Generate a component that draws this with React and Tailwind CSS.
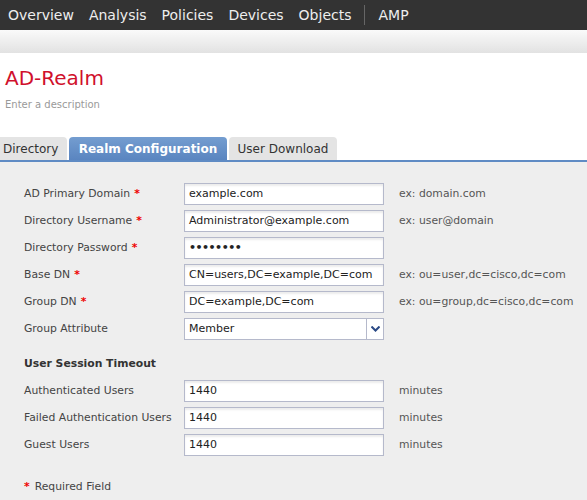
// Realm configuration form
const NAV = ['Overview', 'Analysis', 'Policies', 'Devices', 'Objects'];

const FIELDS = [
  { label: 'AD Primary Domain', req: true, value: 'example.com', hint: 'ex: domain.com' },
  { label: 'Directory Username', req: true, value: 'Administrator@example.com', hint: 'ex: user@domain' },
  { label: 'Directory Password', req: true, value: '••••••••', hint: '', pw: true },
  { label: 'Base DN', req: true, value: 'CN=users,DC=example,DC=com', hint: 'ex: ou=user,dc=cisco,dc=com' },
  { label: 'Group DN', req: true, value: 'DC=example,DC=com', hint: 'ex: ou=group,dc=cisco,dc=com' },
];

const TIMEOUTS = ['Authenticated Users', 'Failed Authentication Users', 'Guest Users'];

function Star() {
  return <span className="text-[#e00] font-bold ml-1">*</span>;
}

function Box({ children }) {
  return (
    <div className="w-[200px] h-[22px] border border-[#b5b9cb] bg-white shadow-[inset_0_2px_2px_rgba(0,0,0,0.08)] flex items-center px-[4px] text-[11px] text-[#222] overflow-hidden whitespace-nowrap">
      {children}
    </div>
  );
}

export default function App() {
  return (
    <div className="w-[587px] h-[500px] overflow-hidden bg-[#eeeeee] font-['DejaVu_Sans',sans-serif]">
      {/* Top nav */}
      <div className="h-[30px] bg-[#333333] flex items-center pl-[8px] text-[14px] text-[#eeeeee]">
        {NAV.map(n => (
          <span key={n} className="mr-[15px]">{n}</span>
        ))}
        <span className="w-px h-[20px] bg-[#666] mr-[13px] -ml-[2px]" />
        <span>AMP</span>
      </div>
      <div className="h-[23px] bg-gradient-to-b from-[#fafafa] to-[#e2e2e2]" />

      {/* Header */}
      <div className="bg-white h-[84px] pl-[5px] pt-[13px]">
        <div className="text-[20px] text-[#d0102c] leading-[24px]">AD-Realm</div>
        <div className="text-[10px] text-[#999] mt-[7px]">Enter a description</div>
      </div>

      {/* Tabs */}
      <div className="bg-white flex items-end h-[25px] border-b-[2px] border-[#5f8bc4]">
        <div className="h-[23px] w-[67px] bg-[#e4e4e4] rounded-tr-[4px] flex items-center pl-[3px] text-[12px] text-[#333]">Directory</div>
        <div className="h-[23px] ml-[2px] w-[158px] bg-gradient-to-b from-[#749dd0] to-[#5a85c0] rounded-t-[4px] flex items-center justify-center text-[12px] font-bold text-white">Realm Configuration</div>
        <div className="h-[23px] ml-[2px] w-[108px] bg-[#e4e4e4] rounded-t-[4px] flex items-center justify-center text-[12px] text-[#333]">User Download</div>
      </div>

      {/* Form */}
      <div className="pl-[24px] pt-[21px] text-[10.8px] text-[#444]">
        <div className="flex flex-col gap-[5px]">
          {FIELDS.map(f => (
            <div key={f.label} className="flex items-center h-[22px]">
              <div className="w-[160px]">{f.label}{f.req && <Star />}</div>
              <Box>{f.pw ? <span className="text-[11px] font-bold tracking-[-0.5px]">{f.value}</span> : f.value}</Box>
              <div className="ml-[15px] text-[#555]">{f.hint}</div>
            </div>
          ))}
          <div className="flex items-center h-[22px]">
            <div className="w-[160px]">Group Attribute</div>
            <div className="w-[200px] h-[22px] border border-[#b5b9cb] bg-white flex items-center text-[11px] text-[#222]">
              <span className="flex-1 px-[4px]">Member</span>
              <span className="w-[17px] h-full border-l border-[#b5b9cb] flex items-center justify-center">
                <svg width="9" height="6" viewBox="0 0 9 6">
                  <path d="M0.5 0.5 L4.5 4.5 L8.5 0.5" stroke="#2b4a86" strokeWidth="2" fill="none" />
                </svg>
              </span>
            </div>
          </div>
        </div>

        <div className="font-bold text-[#333] mt-[16px] mb-[8px]">User Session Timeout</div>
        <div className="flex flex-col gap-[5px]">
          {TIMEOUTS.map(t => (
            <div key={t} className="flex items-center h-[22px]">
              <div className="w-[160px]">{t}</div>
              <Box>1440</Box>
              <div className="ml-[15px] text-[#555]">minutes</div>
            </div>
          ))}
        </div>

        <div className="mt-[23px]"><span className="text-[#e00] font-bold mr-[5px]">*</span>Required Field</div>
      </div>
    </div>
  );
}
